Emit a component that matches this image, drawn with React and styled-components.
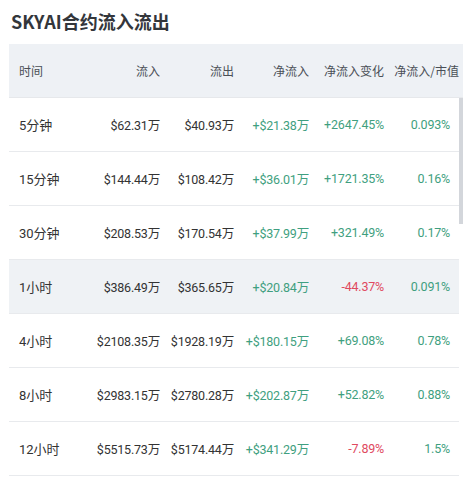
import styled, { createGlobalStyle } from "styled-components";

const GlobalStyle = createGlobalStyle`
  html, body {
    margin: 0;
    padding: 0;
    background: #fff;
  }
  body {
    font-family: Roboto, "Noto Sans CJK SC", sans-serif;
    color: #333;
  }
`;

const Heading = {
  title: "SKYAI合约流入流出",
  columns: ["时间", "流入", "流出", "净流入", "净流入变化", "净流入/市值"],
};

const rows = [
  { time: "5分钟", inflow: "$62.31万", outflow: "$40.93万", net: "+$21.38万", change: "+2647.45%", up: true, ratio: "0.093%" },
  { time: "15分钟", inflow: "$144.44万", outflow: "$108.42万", net: "+$36.01万", change: "+1721.35%", up: true, ratio: "0.16%" },
  { time: "30分钟", inflow: "$208.53万", outflow: "$170.54万", net: "+$37.99万", change: "+321.49%", up: true, ratio: "0.17%" },
  { time: "1小时", inflow: "$386.49万", outflow: "$365.65万", net: "+$20.84万", change: "-44.37%", up: false, ratio: "0.091%", active: true },
  { time: "4小时", inflow: "$2108.35万", outflow: "$1928.19万", net: "+$180.15万", change: "+69.08%", up: true, ratio: "0.78%" },
  { time: "8小时", inflow: "$2983.15万", outflow: "$2780.28万", net: "+$202.87万", change: "+52.82%", up: true, ratio: "0.88%" },
  { time: "12小时", inflow: "$5515.73万", outflow: "$5174.44万", net: "+$341.29万", change: "-7.89%", up: false, ratio: "1.5%" },
];

const FlowTable = () => {
  return (
    <>
      <GlobalStyle />
      <WrapBox>
        <TitleDiv>{Heading.title}</TitleDiv>
        <TableBox>
          <HeadRow>
            {Heading.columns.map((c, i) => (
              <HeadCell key={c} $first={i === 0}>{c}</HeadCell>
            ))}
          </HeadRow>
          <BodyBox>
            {rows.map((r) => (
              <DataRow key={r.time} $active={r.active}>
                <TimeCell>{r.time}</TimeCell>
                <NumCell>{r.inflow}</NumCell>
                <NumCell>{r.outflow}</NumCell>
                <NumCell $tone="up">{r.net}</NumCell>
                <NumCell $tone={r.up ? "up" : "down"}>{r.change}</NumCell>
                <NumCell $tone="up" $last>{r.ratio}</NumCell>
              </DataRow>
            ))}
            <ScrollThumb />
          </BodyBox>
        </TableBox>
      </WrapBox>
    </>
  );
};

const WrapBox = styled.div`
  padding: 0 8px 0 9px;
`;

const TitleDiv = styled.div`
  height: 44px;
  display: flex;
  align-items: center;
  padding: 0 0 2px 2px;
  box-sizing: border-box;
  font-size: 18px;
  font-weight: 700;
  color: #33363b;
  font-family: "Noto Sans CJK SC", sans-serif;
`;

const TableBox = styled.div`
  width: 454px;
`;

const grid = `
  display: grid;
  grid-template-columns: 81px 70px 74px 75px 75px 75px;
  align-items: center;
`;

const HeadRow = styled.div`
  ${grid}
  width: 450px;
  padding-right: 4px;
  height: 53px;
  background: #eef1f5;
  border-bottom: 1px solid #e6e8eb;
  font-size: 12px;
  color: #4a4f56;
  font-family: "Noto Sans CJK SC", sans-serif;
`;

const HeadCell = styled.div`
  text-align: ${(p) => (p.$first ? "left" : "right")};
  padding-left: ${(p) => (p.$first ? "10px" : "0")};
  white-space: nowrap;
`;

const BodyBox = styled.div`
  position: relative;
  width: 450px;
`;

const DataRow = styled.div`
  ${grid}
  height: 53px;
  border-bottom: 1px solid #e8eaed;
  background: ${(p) => (p.$active ? "#eff2f5" : "#fff")};
  font-size: 12.5px;
`;

const TimeCell = styled.div`
  padding-left: 10px;
  font-size: 13px;
  color: #333;
`;

const NumCell = styled.div`
  text-align: right;
  white-space: nowrap;
  padding-right: ${(p) => (p.$last ? "9px" : "0")};
  letter-spacing: -0.2px;
  color: ${(p) =>
    p.$tone === "up" ? "#3f9f80" : p.$tone === "down" ? "#e04a5f" : "#333"};
`;

const ScrollThumb = styled.div`
  position: absolute;
  top: 0;
  right: -4px;
  width: 4px;
  height: 126px;
  background: #d3d6db;
`;

export default FlowTable;
